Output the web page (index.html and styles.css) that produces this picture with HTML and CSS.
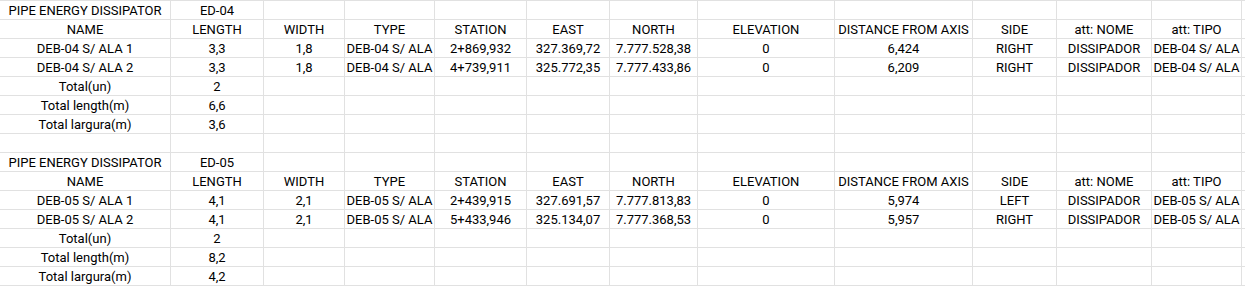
FILE: index.html
```html
<!DOCTYPE html>
<html lang="en">
<head>
<meta charset="utf-8">
<title>Pipe Energy Dissipator</title>
<link rel="stylesheet" href="styles.css">
</head>
<body>
<div class="sheet">
  <div class="row"><div class="c">PIPE ENERGY DISSIPATOR</div><div class="c">ED-04</div><div class="c"></div><div class="c"></div><div class="c"></div><div class="c"></div><div class="c"></div><div class="c"></div><div class="c"></div><div class="c"></div><div class="c"></div><div class="c"></div><div class="c"></div></div>
  <div class="row"><div class="c">NAME</div><div class="c">LENGTH</div><div class="c">WIDTH</div><div class="c">TYPE</div><div class="c">STATION</div><div class="c">EAST</div><div class="c">NORTH</div><div class="c">ELEVATION</div><div class="c">DISTANCE FROM AXIS</div><div class="c">SIDE</div><div class="c">att: NOME</div><div class="c">att: TIPO</div><div class="c"></div></div>
  <div class="row"><div class="c">DEB-04 S/ ALA 1</div><div class="c">3,3</div><div class="c">1,8</div><div class="c">DEB-04 S/ ALA</div><div class="c">2+869,932</div><div class="c">327.369,72</div><div class="c">7.777.528,38</div><div class="c">0</div><div class="c">6,424</div><div class="c">RIGHT</div><div class="c">DISSIPADOR</div><div class="c">DEB-04 S/ ALA</div><div class="c"></div></div>
  <div class="row"><div class="c">DEB-04 S/ ALA 2</div><div class="c">3,3</div><div class="c">1,8</div><div class="c">DEB-04 S/ ALA</div><div class="c">4+739,911</div><div class="c">325.772,35</div><div class="c">7.777.433,86</div><div class="c">0</div><div class="c">6,209</div><div class="c">RIGHT</div><div class="c">DISSIPADOR</div><div class="c">DEB-04 S/ ALA</div><div class="c"></div></div>
  <div class="row"><div class="c">Total(un)</div><div class="c">2</div><div class="c"></div><div class="c"></div><div class="c"></div><div class="c"></div><div class="c"></div><div class="c"></div><div class="c"></div><div class="c"></div><div class="c"></div><div class="c"></div><div class="c"></div></div>
  <div class="row"><div class="c">Total length(m)</div><div class="c">6,6</div><div class="c"></div><div class="c"></div><div class="c"></div><div class="c"></div><div class="c"></div><div class="c"></div><div class="c"></div><div class="c"></div><div class="c"></div><div class="c"></div><div class="c"></div></div>
  <div class="row"><div class="c">Total largura(m)</div><div class="c">3,6</div><div class="c"></div><div class="c"></div><div class="c"></div><div class="c"></div><div class="c"></div><div class="c"></div><div class="c"></div><div class="c"></div><div class="c"></div><div class="c"></div><div class="c"></div></div>
  <div class="row"><div class="c"></div><div class="c"></div><div class="c"></div><div class="c"></div><div class="c"></div><div class="c"></div><div class="c"></div><div class="c"></div><div class="c"></div><div class="c"></div><div class="c"></div><div class="c"></div><div class="c"></div></div>
  <div class="row"><div class="c">PIPE ENERGY DISSIPATOR</div><div class="c">ED-05</div><div class="c"></div><div class="c"></div><div class="c"></div><div class="c"></div><div class="c"></div><div class="c"></div><div class="c"></div><div class="c"></div><div class="c"></div><div class="c"></div><div class="c"></div></div>
  <div class="row"><div class="c">NAME</div><div class="c">LENGTH</div><div class="c">WIDTH</div><div class="c">TYPE</div><div class="c">STATION</div><div class="c">EAST</div><div class="c">NORTH</div><div class="c">ELEVATION</div><div class="c">DISTANCE FROM AXIS</div><div class="c">SIDE</div><div class="c">att: NOME</div><div class="c">att: TIPO</div><div class="c"></div></div>
  <div class="row"><div class="c">DEB-05 S/ ALA 1</div><div class="c">4,1</div><div class="c">2,1</div><div class="c">DEB-05 S/ ALA</div><div class="c">2+439,915</div><div class="c">327.691,57</div><div class="c">7.777.813,83</div><div class="c">0</div><div class="c">5,974</div><div class="c">LEFT</div><div class="c">DISSIPADOR</div><div class="c">DEB-05 S/ ALA</div><div class="c"></div></div>
  <div class="row"><div class="c">DEB-05 S/ ALA 2</div><div class="c">4,1</div><div class="c">2,1</div><div class="c">DEB-05 S/ ALA</div><div class="c">5+433,946</div><div class="c">325.134,07</div><div class="c">7.777.368,53</div><div class="c">0</div><div class="c">5,957</div><div class="c">RIGHT</div><div class="c">DISSIPADOR</div><div class="c">DEB-05 S/ ALA</div><div class="c"></div></div>
  <div class="row"><div class="c">Total(un)</div><div class="c">2</div><div class="c"></div><div class="c"></div><div class="c"></div><div class="c"></div><div class="c"></div><div class="c"></div><div class="c"></div><div class="c"></div><div class="c"></div><div class="c"></div><div class="c"></div></div>
  <div class="row"><div class="c">Total length(m)</div><div class="c">8,2</div><div class="c"></div><div class="c"></div><div class="c"></div><div class="c"></div><div class="c"></div><div class="c"></div><div class="c"></div><div class="c"></div><div class="c"></div><div class="c"></div><div class="c"></div></div>
  <div class="row"><div class="c">Total largura(m)</div><div class="c">4,2</div><div class="c"></div><div class="c"></div><div class="c"></div><div class="c"></div><div class="c"></div><div class="c"></div><div class="c"></div><div class="c"></div><div class="c"></div><div class="c"></div><div class="c"></div></div>
</div>
</body>
</html>
```
FILE: styles.css
```css
html, body {
  margin: 0;
  padding: 0;
  background: #ffffff;
  overflow: hidden;
}
.sheet {
  width: 1245px;
  overflow: hidden;
  border-top: 1px solid #e1e1e1;
  font-family: Roboto, "Liberation Sans", sans-serif;
  font-size: 13px;
  color: #000000;
}
.row {
  display: grid;
  grid-template-columns: 171px 93px 81px 90px 92px 83px 88px 137px 138px 84px 95px 90px 58px;
  height: 19px;
}
.c {
  box-sizing: border-box;
  border-right: 1px solid #e1e1e1;
  border-bottom: 1px solid #e1e1e1;
  display: flex;
  align-items: flex-end;
  justify-content: center;
  line-height: 14px;
  padding-bottom: 1px;
  white-space: nowrap;
  overflow: hidden;
}
```
